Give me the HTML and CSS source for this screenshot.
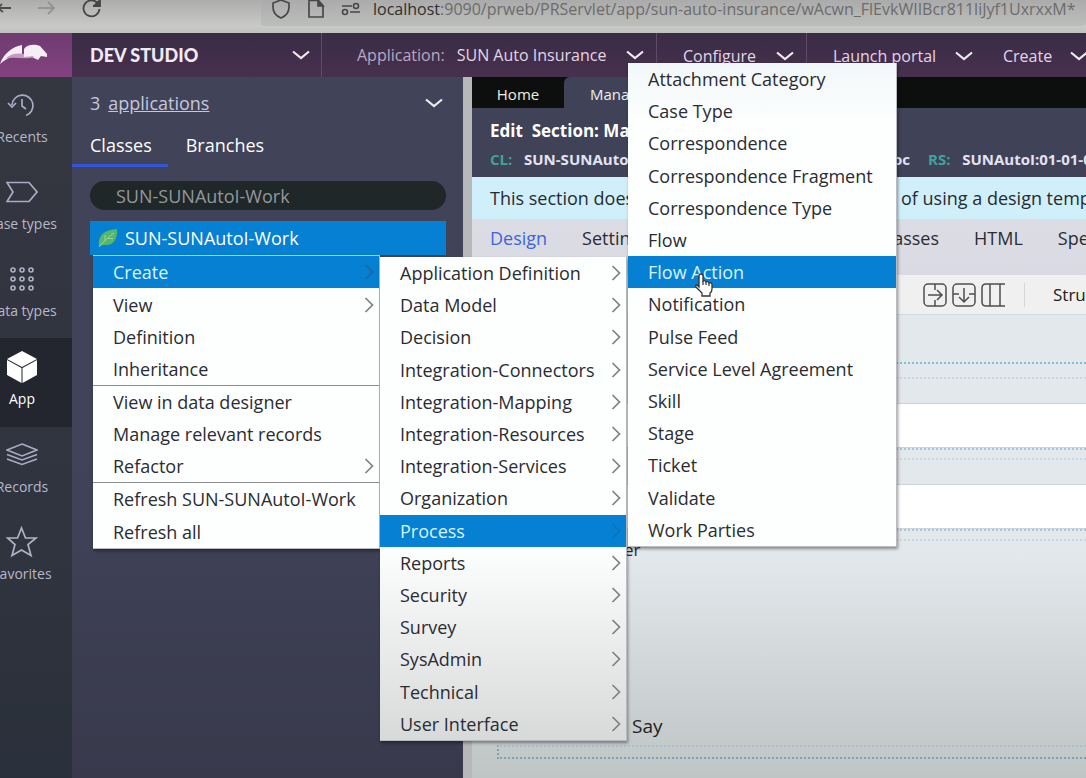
FILE: index.html
```html
<!DOCTYPE html>
<html lang="en">
<head>
<meta charset="utf-8">
<title>Dev Studio</title>
<link rel="stylesheet" href="styles.css">
</head>
<body>
<svg class="defs" aria-hidden="true">
  <symbol id="down" viewBox="0 0 18 10"><path d="M1 1.5 L9 8 L17 1.5" fill="none" stroke="currentColor" stroke-width="2.2"/></symbol>
  <symbol id="right" viewBox="0 0 10 16"><path d="M1.5 1 L8.5 8 L1.5 15" fill="none" stroke="currentColor" stroke-width="1.7"/></symbol>
</svg>

<div class="browser">
  <div class="nav-icons">
    <svg width="12" height="20" viewBox="0 0 12 20" fill="none" stroke="#4c4c4c" stroke-width="1.8"><path d="M-2 10H11M2 6L-2 10L3 14"/></svg>
    <svg width="18" height="20" viewBox="0 0 18 20" fill="none" stroke="#949494" stroke-width="1.8"><path d="M0 10H16M10 4L16 10L10 16"/></svg>
    <svg width="20" height="20" viewBox="0 0 20 20" fill="none" stroke="#454545" stroke-width="1.8"><path d="M17.5 11A8 8 0 1 1 15 4.500M18 1V8H11"/><path d="M13 7H17V3Z" fill="#454545"/></svg>
  </div>
  <div class="address">
    <svg width="20" height="20" viewBox="0 0 20 20" fill="none" stroke="#484848" stroke-width="1.7"><path d="M10 1L18 4V8C18 13 15 17 10 19C5 17 2 13 2 8V4Z"/></svg>
    <svg width="18" height="20" viewBox="0 0 18 20" fill="none" stroke="#484848" stroke-width="1.7"><path d="M2 1.500H11L16 6.500V18H2Z"/><path d="M11 1V7H16Z" fill="#484848"/></svg>
    <svg width="20" height="20" viewBox="0 0 20 20" fill="none" stroke="#484848" stroke-width="1.6"><path d="M1 7H11M9 13H19"/><circle cx="15" cy="7" r="2.500"/><circle cx="4" cy="13" r="2.500"/></svg>
    <span class="url"><b>localhost</b>:9090/prweb/PRServlet/app/sun-auto-insurance/wAcwn_FlEvkWIIBcr811liJyf1UxrxxM*</span>
  </div>
</div>

<header class="topbar">
  <div class="logo">
    <svg width="48" height="22" viewBox="0 0 48 22"><path d="M0 20C3 11 11 3 22 1V13C14 10 6 15 0 20Z" fill="#f5eef5"/><path d="M5 15C13 7 24 9 34 13C26 16 13 12 5 15Z" fill="#c49bc3"/><path d="M24 13V5C27 0 35 0 40 2L47 10V13L41 12L38 16L32 13L34 12Z" fill="#f5eef5"/></svg>
  </div>
  <button class="studio">DEV STUDIO <svg class="down"><use href="#down"/></svg></button>
  <button class="app-menu"><span class="muted">Application:</span> <span>SUN Auto Insurance</span> <svg class="down"><use href="#down"/></svg></button>
  <button class="configure">Configure <svg class="down"><use href="#down"/></svg></button>
  <button class="portal">Launch portal <svg class="down"><use href="#down"/></svg></button>
  <button class="new">Create <svg class="down"><use href="#down"/></svg></button>
</header>

<main class="workspace">
  <nav class="rail">
    <a href="#"><svg width="32" height="32" viewBox="0 0 32 32" fill="none" stroke="#a9acc4" stroke-width="1.7"><path d="M6 16A10.500 10.500 0 1 1 20 26.500M2 14L6 18L10 14M16 10V17L20 20"/></svg>Recents</a>
    <a href="#"><svg width="32" height="32" viewBox="0 0 32 32" fill="none" stroke="#a9acc4" stroke-width="1.7"><path d="M1 6.500H23L31 16L23 25.500H1L7 16Z"/></svg>Case types</a>
    <a href="#"><svg width="32" height="32" viewBox="0 0 32 32" fill="none" stroke="#b0b2c6" stroke-width="1.6"><circle cx="7" cy="7" r="2"/><circle cx="16" cy="7" r="2"/><circle cx="25" cy="7" r="2"/><circle cx="7" cy="16" r="2"/><circle cx="16" cy="16" r="2"/><circle cx="25" cy="16" r="2"/><circle cx="7" cy="25" r="2"/><circle cx="16" cy="25" r="2"/><circle cx="25" cy="25" r="2"/></svg>Data types</a>
    <a href="#" class="current"><svg width="32" height="32" viewBox="0 0 32 32"><path d="M16 0L31 8L16 16L1 8Z" fill="#fff"/><path d="M1 9L15.500 17V32L1 24Z" fill="#fff"/><path d="M31 9L16.500 17V32L31 24Z" fill="#fff"/></svg>App</a>
    <a href="#"><svg width="32" height="32" viewBox="0 0 32 32" fill="none" stroke="#a9acc4" stroke-width="1.6"><path d="M16 5L31 11L16 17L1 11ZM1 15.500L16 21L31 15.500M1 20L16 25.500L31 20"/></svg>Records</a>
    <a href="#"><svg width="32" height="32" viewBox="0 0 32 32" fill="none" stroke="#b0b2c6" stroke-width="1.7"><path d="M15.500 2L19.500 12H30L22 18.500L25 29.500L15.500 24L6 29.500L9 18.500L1.500 12H11.500Z"/></svg>Favorites</a>
  </nav>

  <aside class="explorer">
    <div class="apps"><span class="count">3 <a href="#">applications</a></span><svg class="down"><use href="#down"/></svg></div>
    <div class="views"><a href="#" class="on">Classes</a><a href="#">Branches</a></div>
    <input class="search" type="text" aria-label="Class" value="SUN-SUNAutoI-Work">
    <div class="node"><svg width="20" height="20" viewBox="0 0 20 20"><path d="M1 19C0 10 3 2 19 1C20 11 15 18 7 17C5 17 3 17 1 19Z" fill="#55b76b"/><path d="M1 19C6 13 10 9 16 5M7 13V7M10 10.500H15" fill="none" stroke="#94d9a0" stroke-width="1"/></svg>SUN-SUNAutoI-Work</div>
  </aside>

  <section class="content">
    <div class="tabs"><a href="#" class="home">Home</a><a href="#" class="open">Manage</a></div>
    <div class="title">
      <h1>Edit &nbsp;Section: Ma</h1>
      <div class="keys"><div class="under"><span><i>CL:</i> &nbsp; SUN-SUNAuto</span><span>oc</span></div><span class="ruleset"><i>RS:</i> &nbsp; SUNAutoI:01-01-01</span></div>
    </div>
    <div class="notice"><div class="under"><span>This section does</span></div><span>of using a design template</span></div>
    <nav class="subtabs"><div class="under"><span class="pair"><a href="#" class="on">Design</a><a href="#">Settings</a></span><a href="#">Classes</a></div><a href="#">HTML</a><a href="#">Specifications</a></nav>
    <div class="tools">
      <svg width="24" height="26" viewBox="0 0 24 26" fill="none" stroke="#4e4e4e" stroke-width="1.5"><rect x="1" y="2" width="22" height="22" rx="4"/><path d="M12 2V8M12 18V24M5 13H19M14 8L19 13L14 18"/></svg>
      <svg width="24" height="26" viewBox="0 0 24 26" fill="none" stroke="#4e4e4e" stroke-width="1.5"><rect x="1" y="2" width="22" height="22" rx="4"/><path d="M1 12H7M17 12H23M12 6V20M7 15L12 20L17 15"/></svg>
      <svg width="24" height="26" viewBox="0 0 24 26" fill="none" stroke="#4e4e4e" stroke-width="1.5"><path d="M24 2H5Q1 2 1 6V20Q1 24 5 24H24M9 2V24M19 2V24"/></svg>
      <button>Structural</button>
    </div>
    <div class="canvas">
      <div class="lines first"></div>
      <div class="slot"></div>
      <div class="lines"></div>
      <div class="slot"></div>
      <div class="lines"></div>
      <p class="label">er</p>
      <p class="say">Say</p>
      <div class="drop"></div>
    </div>
  </section>
</main>

<ul class="menu context">
  <li class="hot"><button>Create</button><svg class="right"><use href="#right"/></svg></li>
  <li><button>View</button><svg class="right"><use href="#right"/></svg></li>
  <li><button>Definition</button></li>
  <li class="rule"><button>Inheritance</button></li>
  <li><button>View in data designer</button></li>
  <li><button>Manage relevant records</button></li>
  <li class="rule"><button>Refactor</button><svg class="right"><use href="#right"/></svg></li>
  <li><button>Refresh SUN-SUNAutoI-Work</button></li>
  <li><button>Refresh all</button></li>
</ul>

<ul class="menu create">
  <li><button>Application Definition</button><svg class="right"><use href="#right"/></svg></li>
  <li><button>Data Model</button><svg class="right"><use href="#right"/></svg></li>
  <li><button>Decision</button><svg class="right"><use href="#right"/></svg></li>
  <li><button>Integration-Connectors</button><svg class="right"><use href="#right"/></svg></li>
  <li><button>Integration-Mapping</button><svg class="right"><use href="#right"/></svg></li>
  <li><button>Integration-Resources</button><svg class="right"><use href="#right"/></svg></li>
  <li><button>Integration-Services</button><svg class="right"><use href="#right"/></svg></li>
  <li><button>Organization</button><svg class="right"><use href="#right"/></svg></li>
  <li class="hot dim"><button>Process</button><svg class="right"><use href="#right"/></svg></li>
  <li><button>Reports</button><svg class="right"><use href="#right"/></svg></li>
  <li><button>Security</button><svg class="right"><use href="#right"/></svg></li>
  <li><button>Survey</button><svg class="right"><use href="#right"/></svg></li>
  <li><button>SysAdmin</button><svg class="right"><use href="#right"/></svg></li>
  <li><button>Technical</button><svg class="right"><use href="#right"/></svg></li>
  <li><button>User Interface</button><svg class="right"><use href="#right"/></svg></li>
</ul>

<ul class="menu process">
  <li><button>Attachment Category</button></li>
  <li><button>Case Type</button></li>
  <li><button>Correspondence</button></li>
  <li><button>Correspondence Fragment</button></li>
  <li><button>Correspondence Type</button></li>
  <li><button>Flow</button></li>
  <li class="hot"><button>Flow Action</button></li>
  <li><button>Notification</button></li>
  <li><button>Pulse Feed</button></li>
  <li><button>Service Level Agreement</button></li>
  <li><button>Skill</button></li>
  <li><button>Stage</button></li>
  <li><button>Ticket</button></li>
  <li><button>Validate</button></li>
  <li><button>Work Parties</button></li>
</ul>

<svg class="pointer" width="20" height="24" viewBox="0 0 20 24"><path d="M5 14V3Q5 1 7 1Q9 1 9 3V8Q11 7 12 9Q14 8 15 10Q18 9 18 12V16Q18 19 16 20V23H8V20L2 14Q1 12 3 12Z" fill="#fff" stroke="#333" stroke-width="1.3"/><path d="M9 8V12M12 9V12M15 10V13" stroke="#333" stroke-width="1.2"/></svg>
</body>
</html>
```

FILE: styles.css
```css
* { box-sizing: border-box; }
body {
  margin: 0;
  height: 100vh;
  overflow: hidden;
  position: relative;
  display: flex;
  flex-direction: column;
  font: 18px/24px "Open Sans", "Noto Sans", sans-serif;
  color: #2a2c33;
}
button { border: 0; padding: 0; background: none; font: inherit; color: inherit; text-align: left; white-space: nowrap; }
a { color: inherit; text-decoration: none; }
svg { flex: none; }
.defs { position: absolute; width: 0; height: 0; }
.down { width: 18px; height: 10px; color: #efeaf2; }
.right { width: 10px; height: 16px; color: #808080; }

/* Browser bar */
.browser {
  flex: 0 0 33px;
  display: flex;
  align-items: flex-start;
  overflow: hidden;
  background: linear-gradient(#adadab, #c9cac7 80%, #bfc1be);
}
.nav-icons { flex: 0 0 261px; display: flex; gap: 26px; margin-top: -2px; }
.address {
  flex: 1;
  display: flex;
  align-items: center;
  gap: 16px;
  margin-top: -8px;
  height: 34px;
  padding-left: 10px;
  border-radius: 4px;
  background: linear-gradient(#a5a5a5, #bcbebc);
  font-size: 16px;
  color: #6c6c6c;
  white-space: nowrap;
}
.url { margin-left: -4px; }
.url b { font-weight: 400; color: #2f2f2f; }

/* Studio header */
.topbar {
  flex: 0 0 44px;
  display: flex;
  background: linear-gradient(#3a2c44, #47304f);
  color: #e2d6e6;
  font-size: 16px;
}
.topbar button { display: flex; align-items: center; border-right: 1px solid #5f4a68; }
.logo { flex: 0 0 72px; display: flex; align-items: center; background: linear-gradient(#6f3b70, #834280); }
.topbar .studio { flex: 0 0 250px; justify-content: space-between; padding: 0 11px 0 18px; font-weight: 900; font-family: Lato, "Open Sans", sans-serif; font-size: 18px; color: #f1e9f4; }
.topbar .app-menu { flex: 0 0 335px; padding: 0 12px 0 35px; gap: 12px; }
.app-menu .down { margin-left: auto; }
.muted { color: #b9a8c0; }
.topbar .configure { flex: 0 0 150px; padding: 2px 12px 0 26px; justify-content: space-between; }
.topbar .portal { flex: 0 0 170px; padding: 2px 0 0 26px; gap: 19px; border: 0; }
.topbar .new { flex: 1; padding: 2px 0 0 26px; gap: 18px; border: 0; }

/* Workspace */
.workspace { flex: 1; display: flex; min-height: 0; }
.rail {
  flex: 0 0 100px;
  margin-left: -28px;
  background: linear-gradient(#343640, #30343e 65%, #2a303b);
  color: #b6b8ca;
  font-size: 14px;
  line-height: 20px;
}
.rail a { display: flex; flex-direction: column; align-items: center; gap: 6px; height: 87px; padding-top: 12px; }
.rail .current { background: #23262f; color: #fff; height: 89px; padding-top: 13px; }

.explorer { flex: 0 0 391px; background: linear-gradient(#414359, #404258 60%, #38394b); color: #fff; }
.apps { display: flex; align-items: center; justify-content: space-between; height: 48px; padding: 4px 20px 0 18px; color: #c6c8da; }
.count { display: flex; gap: 8px; }
.apps a { text-decoration: underline; }
.views { display: flex; height: 42px; }
.views a { padding: 8px 16px 8px 18px; border-bottom: 3px solid transparent; }
.views .on { border-color: #3355d8; }
.search {
  display: block;
  width: 356px;
  height: 29px;
  margin: 14px 0 11px 18px;
  padding: 0 26px;
  border: 0;
  border-radius: 15px;
  background: #202729;
  color: #92989c;
  font: inherit;
}
.node { display: flex; align-items: center; gap: 7px; width: 356px; height: 34px; margin-left: 18px; padding-left: 8px; background: #0580d2; }

.content { flex: 1; min-width: 0; display: flex; flex-direction: column; border-left: 9px solid #b6b8ba; overflow: hidden; white-space: nowrap; }
.tabs { display: flex; height: 31px; background: #0d0f0f; color: #eee; font-size: 15px; line-height: 34px; }
.home { width: 92px; text-align: center; color: #f2efda; }
.open { width: 160px; padding-left: 26px; border-radius: 6px 0 0 0; background: #404257; }
.title { height: 69px; padding: 11px 0 0 18px; background: #404257; color: #fff; }
h1 { margin: 0; font-size: 17px; line-height: 24px; }
.keys { display: flex; margin-top: 5px; font-size: 15px; line-height: 22px; font-weight: 700; color: #e2e3f3; }
.keys i { font-style: normal; color: #3fa39c; }
.under { flex: none; display: flex; justify-content: space-between; }
.keys .under { width: 420px; margin-right: 18px; }
.notice { display: flex; height: 42px; padding-left: 18px; line-height: 43px; background: #cff0fb; color: #262b31; }
.notice .under { width: 411px; }
.subtabs { display: flex; gap: 35px; height: 56px; padding-left: 18px; line-height: 38px; background: linear-gradient(#dcdde3, #d9dae3); }
.subtabs .under { width: 449px; }
.pair { display: flex; gap: 35px; }
.subtabs .on { color: #3c64dc; }
.tools { display: flex; align-items: center; gap: 5px; height: 40px; padding-left: 451px; background: #eff0ef; border-bottom: 1px solid #cfdbe2; }
.tools button { margin-left: 14px; padding-left: 28px; border-left: 1px solid #d5d7d6; color: #222; font-size: 17px; }

.canvas { flex: 1; padding-top: 47px; background: linear-gradient(#e3e8ec 0, #e3e8ec 52%, #c4c9ca 93%, #bfc4c5); }
.lines { height: 36px; border-top: 2px dotted #a8c6d8; }
.lines::after { content: ""; display: block; margin-top: 8px; border-top: 2px dotted #cbd5e0; }
.first { height: 41px; border-color: #7fbfd6; }
.first::after { margin-top: 13px; }
.slot { height: 45px; border: solid #cbd4da; border-width: 1px 0; background: #fff; }
.label { margin: -27px 0 0 152px; font-size: 17px; }
.say { margin: 152px 0 0 160px; font-size: 19px; color: #222; }
.drop { height: 14px; margin: 7px 0 0 25px; border: 2px dotted #7f9fb5; border-top-color: #a9bfd0; border-right: 0; }

/* Menus */
.menu {
  position: absolute;
  display: grid;
  grid-auto-rows: 1fr;
  margin: 0;
  padding: 0;
  list-style: none;
  background: #fdfefe;
  border: solid #b9bbc0;
  border-width: 0 1px 1px 0;
  box-shadow: 1px 2px 3px #0006;
}
.menu li { display: flex; align-items: center; justify-content: space-between; padding: 0 5px 0 20px; }
.hot { background: #0580d2; color: #d8f4ff; }
.hot .right { color: #22659a; }
.dim .right { color: #0b73bb; }
.rule { border-bottom: 1px solid #8b8d90; }
.context { left: 93px; top: 255px; width: 287px; height: 294px; border-top: 1px solid #9fd3f3; }
.create { left: 380px; top: 257px; width: 247px; height: 484px; background: linear-gradient(#fdfefe 60%, #d8dad9); }
.process { left: 628px; top: 63px; width: 269px; height: 484px; background: linear-gradient(#f1f7f9, #fdfefe 12%); }
.pointer { position: absolute; left: 694px; top: 273px; }
```
